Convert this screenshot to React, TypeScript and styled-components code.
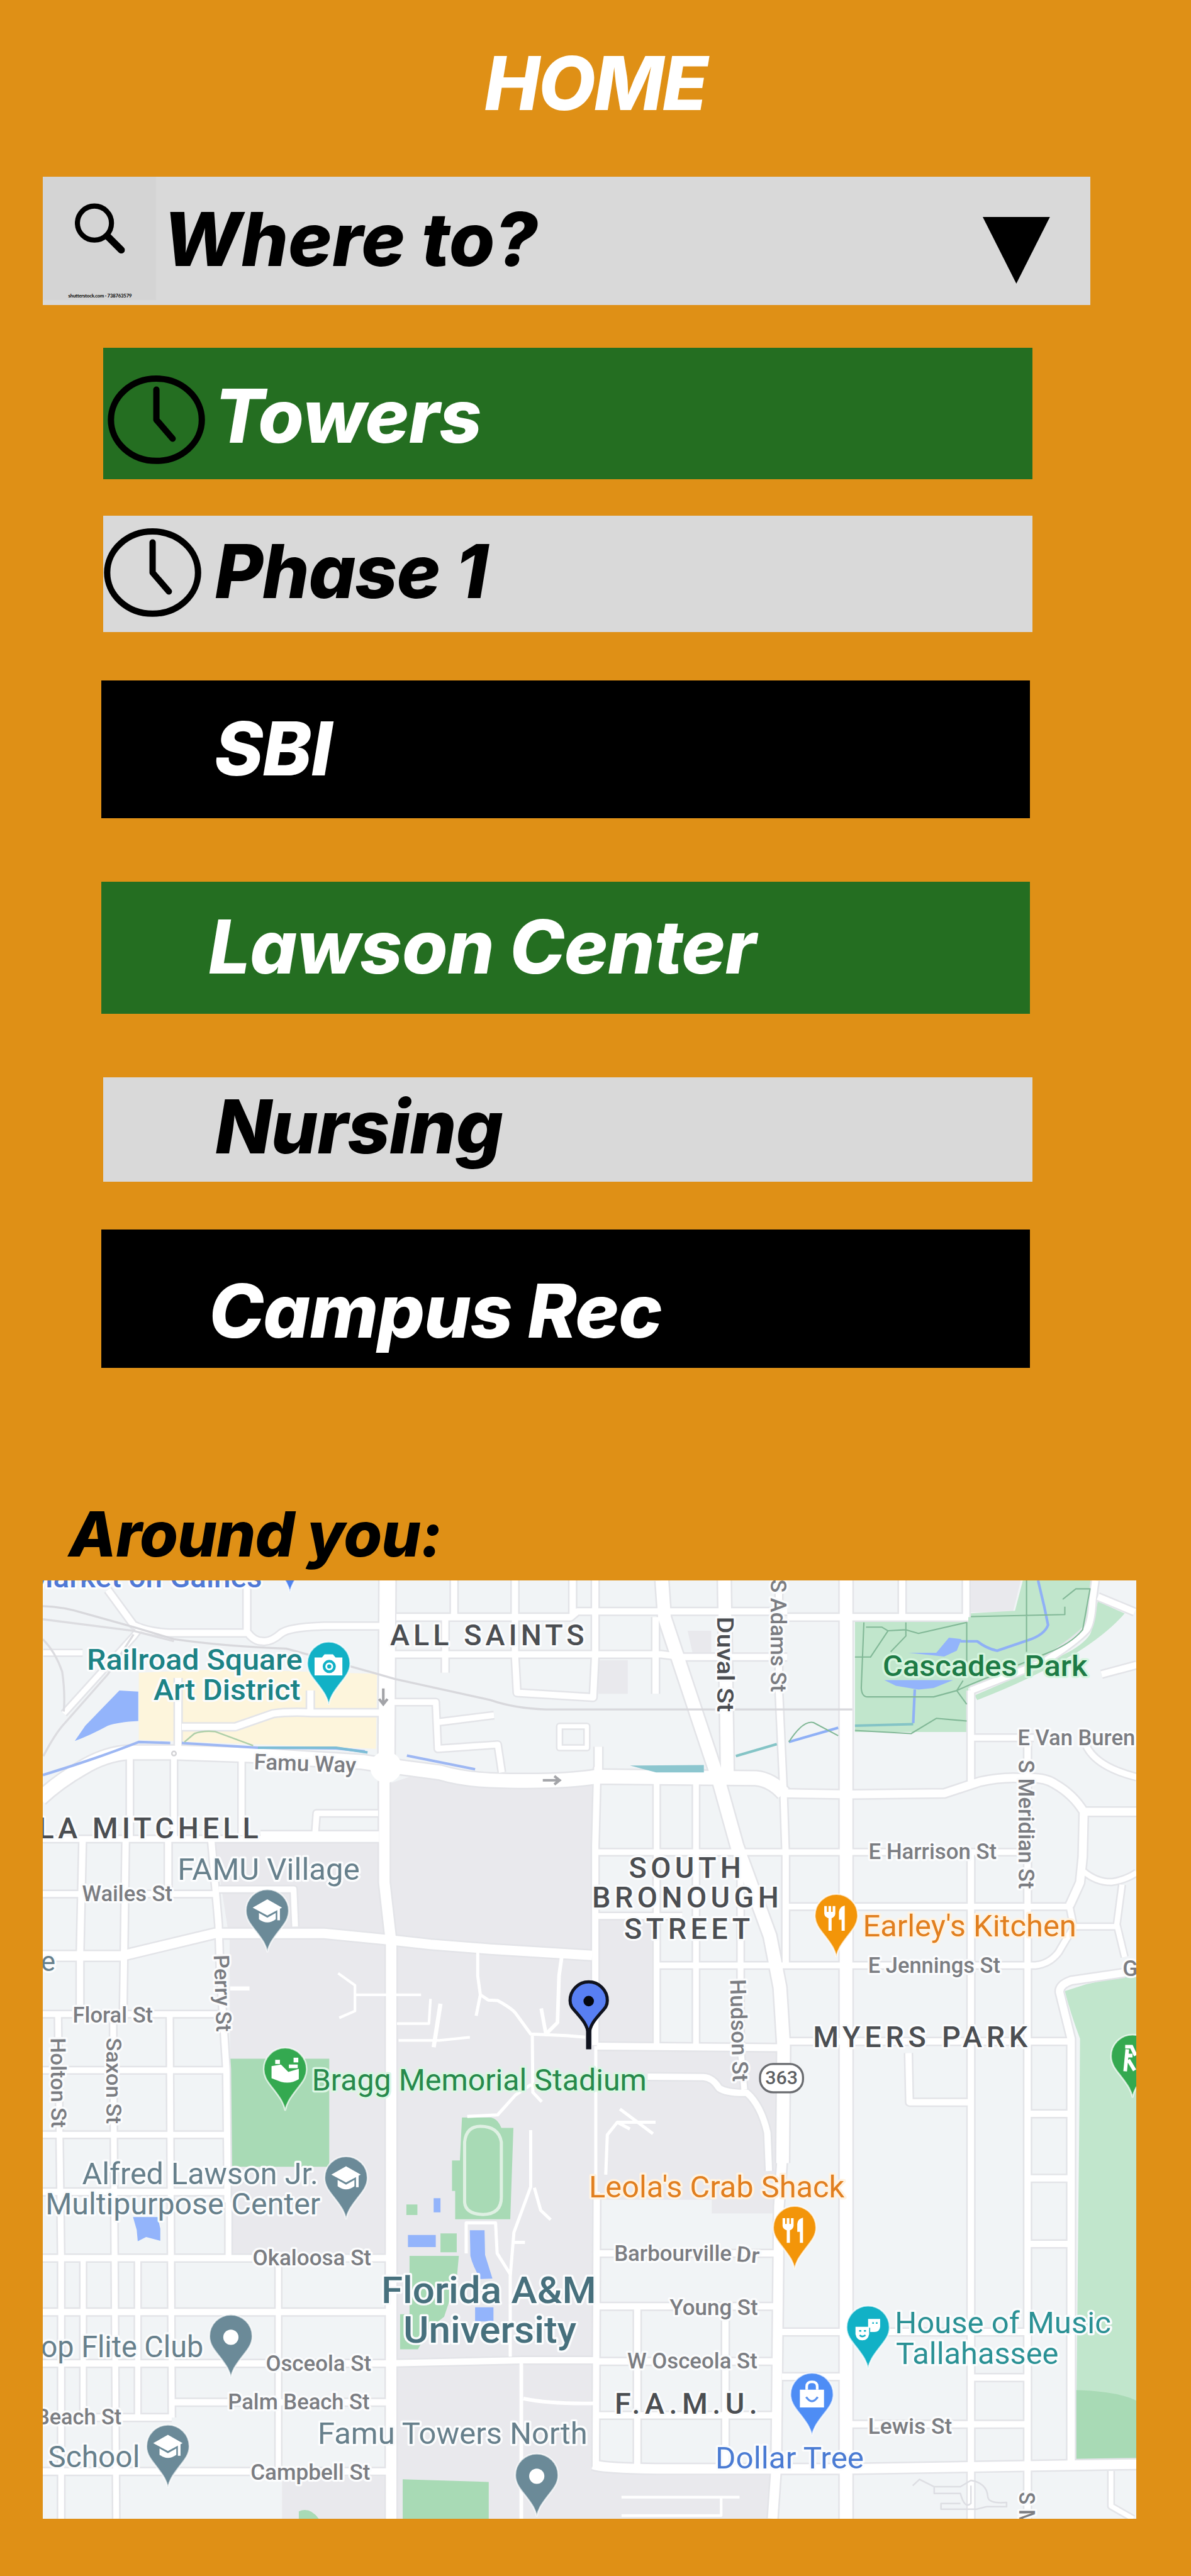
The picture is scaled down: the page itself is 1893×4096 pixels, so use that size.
import React from "react";
import styled, { createGlobalStyle } from "styled-components";

const SCALE = 1893 / 2270;
const u = (n: number) => `${(n * SCALE).toFixed(2)}px`;

const ORANGE = "#df9016";
const GREEN = "#246e21";
const GREY = "#d9d9d9";

const GlobalStyle = createGlobalStyle`
  *, *::before, *::after { box-sizing: border-box; }
  html, body { margin: 0; background: ${ORANGE}; }
`;

const Page = styled.main`
  width: 1893px;
  height: 4096px;
  overflow: hidden;
  display: flex;
  flex-direction: column;
  align-items: flex-start;
  background: ${ORANGE};
  font-family: Inter, "Liberation Sans", sans-serif;
  font-weight: 800;
  font-style: italic;
`;

const Heading = styled.h1`
  margin: 0;
  width: 100%;
  padding-top: ${u(73)};
  height: ${u(336.5)};
  text-align: center;
  font: inherit;
  font-size: ${u(141)};
  line-height: 1.21;
  letter-spacing: -0.02em;
  color: #fff;
`;

const SearchBar = styled.div`
  display: flex;
  align-items: flex-start;
  margin-left: ${u(81)};
  width: ${u(1997)};
  height: ${u(245.2)};
  background: ${GREY};
`;

const SearchPicture = styled.div`
  display: flex;
  flex-direction: column;
  align-items: center;
  justify-content: space-between;
  width: ${u(216)};
  height: ${u(235)};
  padding: ${u(50)} 0 ${u(2)} 0;
  background: #d4d4d4;
  svg { width: ${u(96)}; height: ${u(97)}; display: block; margin-left: ${u(4)}; }
`;

const Credit = styled.span`
  font-family: Lato, sans-serif;
  font-weight: 700;
  font-style: normal;
  font-size: ${u(9.2)};
  line-height: 1.2;
  letter-spacing: -0.02em;
  white-space: nowrap;
  padding-left: ${u(3)};
  color: #000;
`;

const SearchText = styled.span`
  flex: 1;
  padding: ${u(33.5)} 0 0 ${u(13.5)};
  font-size: ${u(141)};
  line-height: 1.21;
  color: #000;
`;

const DropArrow = styled.svg`
  width: ${u(128)};
  height: ${u(127)};
  margin: ${u(77.5)} ${u(77)} 0 0;
  display: block;
`;

const List = styled.ul`
  list-style: none;
  margin: 0;
  padding: 0;
`;

const Item = styled.li<{ $bg: string; $fg: string; $x: number; $gap: number; $h: number }>`
  display: flex;
  align-items: flex-start;
  margin-left: ${(p) => u(p.$x)};
  margin-top: ${(p) => u(p.$gap)};
  width: ${u(1770.5)};
  height: ${(p) => u(p.$h)};
  background: ${(p) => p.$bg};
  color: ${(p) => p.$fg};
`;

const IconSlot = styled.div<{ $w: number; $x: number; $y: number }>`
  flex: none;
  width: ${(p) => u(p.$w)};
  padding: ${(p) => u(p.$y)} 0 0 ${(p) => u(p.$x)};
  svg { display: block; width: ${u(186)}; height: ${u(169)}; }
`;

const ItemLabel = styled.span<{ $top: number; $track: number }>`
  padding-top: ${(p) => u(p.$top)};
  font-size: ${u(141)};
  line-height: 1.21;
  letter-spacing: ${(p) => p.$track}em;
  white-space: nowrap;
`;

const Around = styled.h2`
  margin: 0;
  height: ${u(405.6)};
  padding: ${u(246)} 0 0 ${u(131)};
  font: inherit;
  font-size: ${u(118.5)};
  line-height: 1.21;
  letter-spacing: -0.011em;
  color: #000;
`;

const MapView = styled.svg`
  display: block;
  margin-left: ${u(81)};
  width: ${u(2085)};
  height: ${u(1789)};
  background: #f1f4f6;
`;

const MapText = styled.text<{ $size: number; $weight: number; $halo: string }>`
  font-family: Roboto, "Liberation Sans", sans-serif;
  font-style: normal;
  font-weight: ${(p) => p.$weight};
  font-size: ${(p) => p.$size}px;
  paint-order: stroke;
  stroke: ${(p) => p.$halo};
  stroke-width: 8px;
  stroke-linejoin: round;
`;

const Road = styled.path`
  fill: none;
  stroke-linecap: butt;
  stroke-linejoin: round;
`;

const Clock = () => (
  <svg viewBox="0 0 186 169" fill="none" stroke="#000" strokeWidth="12" strokeLinecap="round" strokeLinejoin="round">
    <ellipse cx="93" cy="84.5" rx="86.6" ry="78.4" />
    <path d="M93 27V84.5L124 120.500" />
  </svg>
);

type Row = { name: string; bg: string; fg: string; x: number; gap: number; h: number; top: number; slot: number; track: number; clock?: [number, number] };

const rows: Row[] = [
  { name: "Towers", bg: GREEN, fg: "#fff", x: 197, gap: 81.6, h: 251, top: 44.4, slot: 211.5, track: -0.006, clock: [7.5, 52.5] },
  { name: "Phase 1", bg: GREY, fg: "#000", x: 197, gap: 68.7, h: 222, top: 21, slot: 212.5, track: -0.01, clock: [1, 24] },
  { name: "SBI", bg: "#000", fg: "#fff", x: 192.5, gap: 92, h: 263, top: 45, slot: 216, track: -0.008 },
  { name: "Lawson Center", bg: GREEN, fg: "#fff", x: 192.5, gap: 121, h: 252.4, top: 39, slot: 205, track: -0.006 },
  { name: "Nursing", bg: GREY, fg: "#000", x: 197, gap: 120.3, h: 199.7, top: 9.5, slot: 213, track: -0.01 },
  { name: "Campus Rec", bg: "#000", fg: "#fff", x: 192.5, gap: 91.5, h: 263.600, top: 68.6, slot: 205.5, track: -0.009 },
];

const CAMPUS = "#e9e9ed";
const PARK = "#c1e6cc";
const FIELD = "#a8dab5";
const WATER = "#93b4fb";

const roads: [number, string][] = [
  // left half, north of Famu Way
  [12, "M205 3032L254 3099Q280 3112 322 3114H472Q484 3130 500 3130Q516 3132 535 3115Q550 3103 617 3101H724M470 3014V3114"],
  [10, "M121 3268L254 3121L270 3100M82 3152H157"],
  [12, "M339 3200V3340M346 3293H448L520 3268Q550 3264 593 3266H730M591 3224V3264"],
  [30, "M738 3014L736 3370"],
  [12, "M755 3084H1087L1100 3073H1500M745 3155H1260L1300 3160H1500M1500 3084H1845"],
  [12, "M865 3014V3084M848 3084V3190M981 3014V3155L985 3228L1130 3237L1134 3155V3014M1091 3014V3080M1249 3084V3230"],
  [11, "M745 3246H830L834 3335L948 3327L956 3380M837 3284L941 3271"],
  [8, "M1066 3292H1118V3333H1066Z"],
  [14, "M1140 3331V3390"],
  [24, "M1380 3014L1386 3395M1612 3014V4803"],
  [24, "M1261 3014L1266 3085L1370 3398L1404 3520L1467 3692L1486 3790L1493 3902L1491 4125"],
  [18, "M1490 4120L1484 4208L1479 4703L1472 4803"],
  [12, "M1484 3014V3224L1493 3420L1497 3540V3750M1719 3014V3084M1841 3014V3084"],
  [12, "M1850 3224V3400M1850 3532V4803M1958 3320V4803"],
  [12, "M2087 3014L2082 3050Q2080 3095 2070 3108Q2050 3130 1988 3170L1850 3224M2092 3045L2162 3074M2099 3193L2166 3175"],
  [11, "M1850 3314H1970M2070 3330Q2090 3370 2166 3389"],
  [26, "M76 3430Q110 3398 157 3371Q200 3345 244 3342H331L477 3347L690 3360L738 3367L837 3380Q880 3393 934 3395Q1060 3400 1138 3388L1440 3391Q1470 3394 1493 3420"],
  [15, "M1493 3420L1624 3422L1799 3420L1866 3398Q1910 3388 1949 3391Q1990 3388 2010 3402Q2045 3422 2065 3455L2063 3541L2058 3590L2038 3634M2065 3455H2166"],
  [20, "M736 3370L732 3400V3590L745 3705V4803"],
  // left half, street grid
  [11, "M247 3350V3507M331 3340V3507M460 3350V3500M496 3498H722M600 3498L603 3458H720M81 3507H722"],
  [12, "M157 3507L152 3730V3850M239 3507L234 3860M320 3507V3605M402 3507L416 3670L419 3760L431 3946L433 4134V4200"],
  [11, "M81 3612H410M416 3603H559L562 3674"],
  [18, "M81 3730H230L409 3687H617L739 3699L820 3708L934 3717L1128 3729"],
  [11, "M81 3841H415M81 3948H430M81 4071H430M110 3841L116 4306V4803M215 3841L221 4803M323 3841L327 4610M435 4200V4306"],
  [12, "M81 4180H430M81 4306H737M81 4409H737M81 4507H737L993 4501H1135M327 4581H737M81 4610H327M81 4713H737"],
  [10, "M158 4306V4610M262 4306V4610M530 4306V4713"],
  // centre right
  [12, "M1138 3370L1134 3520V3900M1137 4180L1135 4704"],
  [11, "M1251 3400V3905M1326 3400V3905M1411 3532V3905L1418 3985M1134 3532H1958M1137 3654H1300M1251 3748H1973Q2000 3745 2017 3723Q2030 3700 2046 3675L2038 3636M1500 3636H2040"],
  [13, "M1137 3902L1486 3905"],
  [10, "M2050 3674H2128M2065 3569Q2090 3590 2119 3589Q2145 3585 2166 3571M2138 3594L2128 3670L2143 3732"],
  [14, "M2143 3762L2041 3777Q2018 3785 2019 3799L2041 3888V4700"],
  [12, "M1500 3893H2035M1731 3915L1733 4009H1850M1958 4031H2035M1958 4154H2035M1958 4279H2041"],
  [12, "M1490 4447H1958M1490 4532H1612M1854 4534H1954M1612 4623H1958"],
  [12, "M1137 4297H1480M1137 4398H1480M1137 4503H1480M1137 4606H1480M1214 4398V4704M1382 4398V4704"],
  [18, "M1130 4700Q1150 4707 1250 4708H1612L2166 4699"],
  [9, "M2117 4712V4779L2159 4803"],
  [12, "M1234 3960L1340 3961Q1358 3962 1370 3982Q1385 3992 1423 3991Q1450 4015 1462 4067L1465 4140"],
];

const paths: [number, string][] = [
  [5, "M644 3763L676 3786V3835L646 3848M676 3804H802M756 3859H817L820 3812M759 3891H837L895 3885"],
  [8, "M438 3792H475M839 3821L826 3904"],
  [6, "M910 3719V3768L915 3804L907 3844M915 3804L930 3814L948 3815Q975 3830 982 3839L1011 3879L1079 3882L1115 3885M1014 3879L1015 3990L1032 4008M1012 3975L982 3995L948 4033L890 4036"],
  [7, "M1070 3732L1065 3768L1062 3857L1040 3879L1031 3830"],
  [6, "M1135 3902V4180M1154 4147L1157 4071L1176 4047H1249M1181 4022L1244 4069M1176 4047L1200 4060"],
  [6, "M1011 4062V4170L979 4257L972 4340V4494M1018 4172L1030 4215L1049 4233M888 4297V4239H944L947 4297L972 4337M979 4276H1000"],
  [7, "M993 4507V4803M997 4574Q1050 4585 1137 4583"],
  [5, "M1184 4762H1409M1374 4762V4797H1184"],
];

type Label = { t: string; x: number; y: number; w: number; s: number; c: string; b?: number; r?: number; caps?: boolean; halo?: string };

const DARK = "#4b4e52";
const STREET = "#7b7d82";
const SLATE = "#67808c";
const TEAL = "#1d8386";
const AMBER = "#e17f1f";

const labels: Label[] = [
  { t: "Market on Gaines", x: 51, y: 3027, w: 448, s: 57, c: "#5079d6", b: 500 },
  { t: "Railroad Square", x: 165, y: 3184, w: 411, s: 56, c: TEAL, b: 500 },
  { t: "Art District", x: 292, y: 3242, w: 280, s: 56, c: TEAL, b: 500 },
  { t: "ALL SAINTS", x: 743, y: 3138, w: 370, s: 56, c: DARK, b: 500, caps: true },
  { t: "Duval St", x: 1367, y: 3083, w: 182, s: 45, c: DARK, b: 500, r: 90 },
  { t: "S Adams St", x: 1469, y: 3012, w: 215, s: 41, c: STREET, b: 500, r: 90 },
  { t: "Cascades Park", x: 1682, y: 3196, w: 390, s: 56, c: "#1d7b45", b: 500, halo: "#d6f5df" },
  { t: "E Van Buren", x: 1939, y: 3328, w: 224, s: 42, c: STREET, b: 500 },
  { t: "S Meridian St", x: 1941, y: 3356, w: 246, s: 41, c: STREET, b: 500, r: 90 },
  { t: "E Harrison St", x: 1655, y: 3545, w: 244, s: 41, c: STREET, b: 500 },
  { t: "Famu Way", x: 483, y: 3374, w: 195, s: 42, c: STREET, b: 500, r: 2 },
  { t: "LA MITCHELL", x: 72, y: 3506, w: 420, s: 56, c: DARK, b: 500, caps: true },
  { t: "FAMU Village", x: 338, y: 3585, w: 347, s: 57, c: SLATE },
  { t: "Wailes St", x: 156, y: 3626, w: 172, s: 42, c: STREET, b: 500 },
  { t: "e", x: 77, y: 3759, w: 28, s: 54, c: SLATE },
  { t: "Perry St", x: 407, y: 3728, w: 147, s: 41, c: STREET, b: 500, r: 88 },
  { t: "Floral St", x: 138, y: 3857, w: 153, s: 42, c: STREET, b: 500 },
  { t: "Holton St", x: 96, y: 3886, w: 172, s: 40, c: STREET, b: 500, r: 89.5 },
  { t: "Saxon St", x: 202, y: 3886, w: 164, s: 40, c: STREET, b: 500, r: 90 },
  { t: "Bragg Memorial Stadium", x: 594, y: 3987, w: 638, s: 57, c: "#278a4c", halo: "#dcf6e4" },
  { t: "Alfred Lawson Jr.", x: 156, y: 4165, w: 450, s: 57, c: SLATE },
  { t: "Multipurpose Center", x: 86, y: 4223, w: 524, s: 57, c: SLATE },
  { t: "SOUTH", x: 1198, y: 3581, w: 214, s: 56, c: DARK, b: 500, caps: true },
  { t: "BRONOUGH", x: 1128, y: 3638, w: 356, s: 56, c: DARK, b: 500, caps: true },
  { t: "STREET", x: 1189, y: 3698, w: 240, s: 56, c: DARK, b: 500, caps: true },
  { t: "Hudson St", x: 1391, y: 3775, w: 195, s: 42, c: STREET, b: 500, r: 88.5 },
  { t: "Earley's Kitchen", x: 1644, y: 3693, w: 407, s: 57, c: AMBER, halo: "#fff3e2" },
  { t: "E Jennings St", x: 1654, y: 3762, w: 252, s: 42, c: STREET, b: 500 },
  { t: "G", x: 2139, y: 3768, w: 29, s: 41, c: STREET, b: 500 },
  { t: "MYERS PARK", x: 1549, y: 3904, w: 409, s: 56, c: DARK, b: 500, caps: true },
  { t: "Leola's Crab Shack", x: 1122, y: 4190, w: 487, s: 57, c: AMBER, halo: "#fff3e2" },
  { t: "Okaloosa St", x: 481, y: 4320, w: 226, s: 42, c: STREET, b: 500 },
  { t: "Florida A&M", x: 726, y: 4392, w: 410, s: 71, c: "#47707d", b: 500 },
  { t: "University", x: 768, y: 4467, w: 330, s: 71, c: "#47707d", b: 500 },
  { t: "Barbourville", x: 1170, y: 4311, w: 224, s: 42, c: STREET, b: 500 },
  { t: "Dr", x: 1402, y: 4312, w: 44, s: 41, c: STREET, b: 500, r: 5 },
  { t: "Young St", x: 1276, y: 4415, w: 168, s: 42, c: STREET, b: 500 },
  { t: "W Osceola St", x: 1195, y: 4516, w: 248, s: 42, c: STREET, b: 500 },
  { t: "F.A.M.U.", x: 1171, y: 4603, w: 272, s: 56, c: DARK, b: 500, caps: true },
  { t: "House of Music", x: 1705, y: 4449, w: 412, s: 57, c: "#2b9195" },
  { t: "Tallahassee", x: 1707, y: 4508, w: 310, s: 57, c: "#2b9195" },
  { t: "Dollar Tree", x: 1363, y: 4707, w: 283, s: 57, c: "#4a7bd3" },
  { t: "Lewis St", x: 1654, y: 4641, w: 160, s: 42, c: STREET, b: 500 },
  { t: "op Flite Club", x: 77, y: 4495, w: 310, s: 57, c: SLATE },
  { t: "Osceola St", x: 506, y: 4521, w: 201, s: 42, c: STREET, b: 500 },
  { t: "Palm Beach St", x: 434, y: 4594, w: 270, s: 42, c: STREET, b: 500 },
  { t: "Beach St", x: 68, y: 4623, w: 163, s: 42, c: STREET, b: 500 },
  { t: "School", x: 91, y: 4705, w: 175, s: 57, c: SLATE },
  { t: "Campbell St", x: 477, y: 4729, w: 228, s: 42, c: STREET, b: 500 },
  { t: "Famu Towers North", x: 605, y: 4661, w: 514, s: 57, c: SLATE },
  { t: "S M", x: 1942, y: 4752, w: 68, s: 41, c: STREET, b: 500, r: 90 },
];

const PIN = "M0 0C-3 -14-8 -22-21 -39C-33 -54-41 -64-41 -79A41 41 0 1 1 41 -79C41 -64 33 -54 21 -39C8 -22 3 -14 0 0Z";

const Pin = ({ x, y, fill, children }: { x: number; y: number; fill: string; children?: React.ReactNode }) => (
  <g transform={`translate(${x} ${y})`}>
    <path d={PIN} fill={fill} stroke="#fff" strokeOpacity="0.7" strokeWidth="3" />
    {children}
  </g>
);

const Cap = () => (
  <g fill="#fff">
    <path d="M0 -101L28 -85L0 -70L-28 -85Z" />
    <path d="M-16 -75L0 -66L16 -75V-63Q0 -51-16 -63Z" />
    <path d="M19 -86H24V-61H19Z" />
  </g>
);

const Fork = () => (
  <g fill="#fff">
    <path d="M-23 -97H-18V-86H-15V-97H-10V-86H-7V-97H-2V-82Q-3 -76-9 -74V-50H-15V-74Q-22 -76-23 -82Z" />
    <path d="M16 -98V-50H10V-71H5V-86Q6 -96 16 -98Z" />
  </g>
);

const Bag = () => (
  <g>
    <path d="M-10 -88V-94Q-10 -103 0 -103Q10 -103 10 -94V-88" fill="none" stroke="#fff" strokeWidth="5" />
    <path d="M-23 -88H23V-54H-23Z" fill="#fff" />
    <path d="M-11 -74Q0 -58 11 -74" fill="none" stroke="#5b93f0" strokeWidth="4" />
  </g>
);

const CameraGlyph = () => (
  <g>
    <path d="M-27 -90H-13L-8 -96H8L13 -90H26V-56H-27Z" fill="#fff" />
    <circle cx="1" cy="-73" r="10" fill="none" stroke="#12b1c6" strokeWidth="5" />
    <circle cx="1" cy="-73" r="4" fill="#12b1c6" />
  </g>
);

const Masks = () => (
  <g>
    <path d="M0 -95H23V-80Q22 -70 12 -70H4V-78H0Z" fill="#fff" />
    <path d="M-24 -80H2V-66Q0 -54-11 -54Q-22 -54-24 -66Z" fill="#fff" />
    <path d="M-17 -72H-13M-8 -72H-4M8 -87H11M15 -87H18M-16 -64Q-11 -59-5 -64" stroke="#12b1c6" strokeWidth="3" fill="none" />
  </g>
);

const Stadium = () => (
  <g fill="#fff">
    <path d="M-26 -85L-8 -88L6 -74L26 -80V-60Q10 -50-8 -55L-26 -62Z" />
    <rect x="-19" y="-97" width="9" height="8" />
    <rect x="16" y="-101" width="9" height="9" />
    <rect x="7" y="-88" width="17" height="7" />
  </g>
);

const Dot = () => <circle cx="0" cy="-77" r="14.500" fill="#fff" />;

const SLATE_PIN = "#6b8a98";

const CityMap = () => (
  <MapView viewBox="81 3014 2085 1789" preserveAspectRatio="none">
    <g fill={CAMPUS}>
      <path d="M407 3507H730L745 3400L790 3385L930 3410L1130 3403L1137 3660H1251V3900H1486L1490 4140L1480 4221H1356V4195H1135V4704L1170 4714H1472V4803H537V4722H745V4308H440L437 3700Z" />
      <path d="M1847 3014H1945L1930 3075H1847ZM1140 3166H1196V3230H1140ZM1310 3110H1355V3155H1320Z" />
    </g>
    <path d="M264 3190L420 3183L718 3192L716 3335L264 3318Z" fill="#fdf5dc" />
    <g fill={PARK}>
      <path d="M1629 3090H1845V3077L1934 3072L1949 3014H2080L2075 3108L2041 3130L1988 3161L1845 3219V3303H1629Z" />
      <path d="M2092 3054L2143 3077Q2110 3115 2051 3152Q1960 3205 1862 3242L1857 3233Q1960 3190 2041 3148Q2078 3125 2080 3108Z" />
      <path d="M2029 3797L2070 3784L2153 3766H2166V4694H2050L2057 4000L2058 3888Q2040 3840 2029 3797Z" />
    </g>
    <g fill={FIELD}>
      <path d="M2050 4558Q2130 4560 2166 4578V4694H2050Z" />
      <path d="M438 3926H627V4132H438Z" />
      <path d="M880 4038H935Q948 4040 955 4058H978L972 4232H867V4178H861V4120H876Z" />
      <path d="M774 4204H795V4224H774ZM839 4259H870V4295H839ZM780 4302H874L870 4345L846 4418L818 4440L796 4480H762V4413H780Z" />
      <path d="M767 4728L931 4733V4803H767ZM569 4803V4789Q590 4780 607 4803Z" />
    </g>

    {roads.map(([w, d], i) => (
      <Road key={i} d={d} stroke="#e3e4e8" strokeWidth={w + 6} />
    ))}
    {roads.map(([w, d], i) => (
      <Road key={i} d={d} stroke="#fff" strokeWidth={w} />
    ))}
    <circle cx="735" cy="3370" r="30" fill="#fff" />
    {paths.map(([w, d], i) => (
      <Road key={i} d={d} stroke="#fff" strokeWidth={w} />
    ))}

    <g fill={WATER}>
      <path d="M227 3224L263 3226V3282Q225 3284 205 3291Q170 3310 142 3320L162 3291Z" />
      <path d="M1731 3152H1784L1808 3123L1832 3126L1823 3148L1799 3159ZM1685 3204H1816L1779 3219L1750 3222L1707 3215Z" />
      <path d="M826 4192H839V4219H826ZM777 4262H830V4285H777ZM895 4253H923L924 4300L938 4345L915 4346Q900 4320 896 4302ZM905 4400H940V4427H905ZM253 4228H300L305 4250V4273L278 4266L262 4274L260 4252Z" />
    </g>

    <Road d="M81 3063Q120 3064 162 3077L254 3103L331 3126Q430 3140 545 3144Q640 3170 753 3202L934 3242Q980 3258 1040 3260H1624" stroke="#d8d8dc" strokeWidth="4" />
    <Road d="M81 3088L254 3110L331 3130M82 3349Q105 3305 123 3286L205 3193L254 3117M81 3126Q105 3150 118 3188Q124 3230 121 3264" stroke="#dcdce0" strokeWidth="4" />
    <Road d="M885 4200V4085Q888 4055 915 4055Q950 4055 955 4085V4190Q955 4222 920 4223Q887 4222 885 4200Z" stroke="#dff0e3" strokeWidth="6" />
    <Road d="M1739 4740L1752 4728L1780 4742H1830L1850 4730Q1880 4735 1882 4760Q1882 4775 1918 4772V4780H1880L1860 4785H1793V4774H1830M1780 4742V4755H1830Q1838 4785 1850 4774V4740" stroke="#dddee3" strokeWidth="3" />
    <Road d="M81 3385Q180 3355 264 3322L324 3324M346 3324L491 3333L640 3334L695 3340M775 3348L905 3374" stroke="#9db7f3" strokeWidth="5" />
    <Road d="M491 3333H640L700 3342" stroke="#7dbdd6" strokeWidth="5" />
    <Road d="M351 3322L370 3306Q385 3300 409 3302L482 3329" stroke="#aecfa9" strokeWidth="3" />
    <Road d="M1978 3014L1990 3065L1997 3099Q1990 3118 1959 3128L1900 3148Q1880 3144 1862 3130H1830M1743 3222L1740 3286M1597 3295L1503 3322" stroke="#8fb0f6" strokeWidth="5" />
    <Road d="M1740 3288L1629 3291M1480 3326L1402 3349" stroke="#84c4c6" strokeWidth="5" />
    <path d="M1200 3367L1341 3366V3380H1250Z" fill="#8cc6cf" />
    <Road d="M1646 3094L1641 3219Q1642 3236 1653 3236H1779L1823 3224L1835 3205M1650 3103H1680L1692 3110L1726 3108L1750 3115L1842 3094V3180M1692 3110L1658 3161M1726 3094V3120L1697 3150M1629 3160H1658M1850 3083L2029 3079V3064M1956 3014V3150M2025 3050L2050 3030H2077L2063 3108Q2040 3135 1997 3152L1850 3212L1823 3224L1842 3250M1629 3300L1736 3306L1784 3277L1842 3282M1503 3322Q1530 3280 1550 3285L1597 3310" stroke="#82b897" strokeWidth="2.500" />
    <g stroke="#a3a4a8" strokeWidth="5" fill="none">
      <path d="M730 3220V3248M722 3240L730 3250L738 3240M1034 3395H1064M1056 3387L1066 3395L1056 3403" />
    </g>
    <circle cx="331" cy="3344" r="4" fill="none" stroke="#d3d3d6" strokeWidth="3" />

    {labels.map((l, i) => (
      <MapText
        key={i}
        x={l.x}
        y={l.y}
        fill={l.c}
        $size={l.s}
        $weight={l.b ?? 400}
        $halo={l.halo ?? "#fbfcfd"}
        textLength={l.w}
        lengthAdjust={l.caps ? "spacing" : "spacingAndGlyphs"}
        transform={l.r ? `rotate(${l.r} ${l.x} ${l.y})` : undefined}
      >
        {l.t}
      </MapText>
    ))}

    <rect x="1448" y="3936" width="82" height="54" rx="25" fill="#fff" stroke="#6a6c70" strokeWidth="4" />
    <MapText x={1458} y={3975} fill="#5d5f63" $size={36} $weight={500} $halo="none" textLength={62} lengthAdjust="spacingAndGlyphs">
      363
    </MapText>

    <Pin x={552} y={3037} fill="#4d83f0" />
    <Pin x={626} y={3251} fill="#12b1c6"><CameraGlyph /></Pin>
    <Pin x={509} y={3723} fill={SLATE_PIN}><Cap /></Pin>
    <Pin x={543} y={4025} fill="#34a950"><Stadium /></Pin>
    <Pin x={659} y={4232} fill={SLATE_PIN}><Cap /></Pin>
    <Pin x={1593.5} y={3732} fill="#f39509"><Fork /></Pin>
    <Pin x={2158} y={4000} fill="#34a950">
      <path d="M-14 -97H-2L6 -80M-10 -92L-14 -50M-8 -72L4 -52M-14 -80H0" stroke="#fff" strokeWidth="7" fill="none" />
    </Pin>
    <Pin x={1514} y={4327} fill="#f39509"><Fork /></Pin>
    <Pin x={1654} y={4517} fill="#12b1c6"><Masks /></Pin>
    <Pin x={1547} y={4645} fill="#4e8df5"><Bag /></Pin>
    <Pin x={439.5} y={4534} fill={SLATE_PIN}><Dot /></Pin>
    <Pin x={319.5} y={4744} fill={SLATE_PIN}><Cap /></Pin>
    <Pin x={1022.5} y={4799} fill={SLATE_PIN}><Dot /></Pin>

    <path d="M1121.500 3870V3908" stroke="#10131f" strokeWidth="10" fill="none" />
    <path d="M1121.500 3880C1118 3860 1110 3852 1098 3838C1090 3829 1086 3825 1086 3815A35.500 35.500 0 1 1 1157 3815C1157 3825 1153 3829 1145 3838C1133 3852 1125 3860 1121.500 3880Z" fill="#587ff3" stroke="#10131f" strokeWidth="6" />
    <circle cx="1121.500" cy="3816" r="10" fill="#05070f" />
  </MapView>
);

export default function App() {
  return (
    <>
      <GlobalStyle />
      <Page>
        <Heading>HOME</Heading>
        <SearchBar>
          <SearchPicture>
            <svg viewBox="0 0 96 97" fill="none" stroke="#000">
              <circle cx="37.300" cy="39.200" r="32.500" strokeWidth="9.700" />
              <path d="M63 65L88.500 90.500" strokeWidth="13.500" strokeLinecap="round" />
            </svg>
            <Credit>shutterstock.com · 738763579</Credit>
          </SearchPicture>
          <SearchText>Where to?</SearchText>
          <DropArrow viewBox="0 0 128 127">
            <path d="M0 0H128L64 127Z" fill="#000" />
          </DropArrow>
        </SearchBar>
        <List>
          {rows.map((r) => (
            <Item key={r.name} $bg={r.bg} $fg={r.fg} $x={r.x} $gap={r.gap} $h={r.h}>
              <IconSlot $w={r.slot} $x={r.clock ? r.clock[0] : 0} $y={r.clock ? r.clock[1] : 0}>
                {r.clock && <Clock />}
              </IconSlot>
              <ItemLabel $top={r.top} $track={r.track}>{r.name}</ItemLabel>
            </Item>
          ))}
        </List>
        <Around>Around you:</Around>
        <CityMap />
      </Page>
    </>
  );
}
